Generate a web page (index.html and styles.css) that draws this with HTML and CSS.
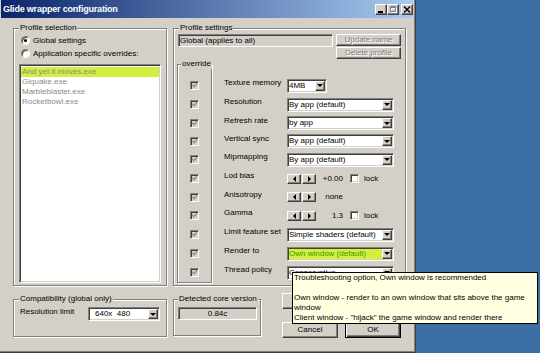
FILE: index.html
```html
<!DOCTYPE html>
<html lang="en">
<head>
    <meta charset="UTF-8">
    <title>Glide wrapper configuration</title>
    <link rel="stylesheet" href="styles.css">
</head>
<body>
    <div class="window">
        <div class="titlebar">
            <span class="title">Glide wrapper configuration</span>
            <div class="caption">
                <span class="cap-btn raised"><svg width="8" height="7" viewBox="0 0 8 7"><rect x="1" y="5" width="5" height="2" fill="#000"/></svg></span>
                <span class="cap-btn raised"><svg width="8" height="7" viewBox="0 0 8 7"><path d="M2.5 2.5h5v4h-5z" stroke="#fff" fill="none"/><path d="M1.5 0.5h5v5h-5zM1.5 1.5h5" stroke="#808080" fill="none"/></svg></span>
                <span class="cap-btn raised close"><svg width="8" height="7" viewBox="0 0 8 7"><path d="M1 0.5l6 6M7 0.5l-6 6" stroke="#000" stroke-width="1.4"/></svg></span>
            </div>
        </div>

        <div class="client">
            <!-- left: profile list -->
            <div class="group profile-select">
                <span class="group-title">Profile selection</span>
                <div class="radio-row first"><span class="radio checked"></span>Global settings</div>
                <div class="radio-row"><span class="radio"></span>Application specific overrides:</div>
                <ul class="listbox sunken">
                    <li class="selected">And yet it moves.exe</li>
                    <li>Glquake.exe</li>
                    <li>Marbleblaster.exe</li>
                    <li>Rocketbowl.exe</li>
                </ul>
            </div>

            <!-- right: settings of the chosen profile -->
            <div class="group profile-settings">
                <span class="group-title">Profile settings</span>
                <div class="profile-row">
                    <div class="edit sunken">Global (applies to all)</div>
                    <div class="profile-buttons">
                        <button class="btn raised" disabled>Update name</button>
                        <button class="btn raised" disabled>Delete profile</button>
                    </div>
                </div>

                <div class="settings">
                    <div class="group override">
                        <span class="group-title">override</span>
                        <span class="check sunken disabled checked"></span>
                        <span class="check sunken disabled checked"></span>
                        <span class="check sunken disabled checked"></span>
                        <span class="check sunken disabled checked"></span>
                        <span class="check sunken disabled checked"></span>
                        <span class="check sunken disabled checked"></span>
                        <span class="check sunken disabled checked"></span>
                        <span class="check sunken disabled checked"></span>
                        <span class="check sunken disabled checked"></span>
                        <span class="check sunken disabled checked"></span>
                        <span class="check sunken disabled checked"></span>
                    </div>

                    <div class="rows">
                        <span class="label">Texture memory</span>
                        <div class="combo sunken narrow"><span class="combo-text">4MB</span><span class="drop raised"></span></div>

                        <span class="label">Resolution</span>
                        <div class="combo sunken"><span class="combo-text">By app (default)</span><span class="drop raised"></span></div>

                        <span class="label">Refresh rate</span>
                        <div class="combo sunken"><span class="combo-text">by app</span><span class="drop raised"></span></div>

                        <span class="label">Vertical sync</span>
                        <div class="combo sunken"><span class="combo-text">By app (default)</span><span class="drop raised"></span></div>

                        <span class="label">Mipmapping</span>
                        <div class="combo sunken"><span class="combo-text">By app (default)</span><span class="drop raised"></span></div>

                        <span class="label">Lod bias</span>
                        <div class="spin-row">
                            <span class="arrow raised left"></span><span class="arrow raised right"></span>
                            <span class="value">+0.00</span>
                            <span class="check sunken lock"></span><span class="lock-text">lock</span>
                        </div>

                        <span class="label">Anisotropy</span>
                        <div class="spin-row">
                            <span class="arrow raised left"></span><span class="arrow raised right"></span>
                            <span class="value">none</span>
                        </div>

                        <span class="label">Gamma</span>
                        <div class="spin-row">
                            <span class="arrow raised left"></span><span class="arrow raised right"></span>
                            <span class="value">1.3</span>
                            <span class="check sunken lock"></span><span class="lock-text">lock</span>
                        </div>

                        <span class="label">Limit feature set</span>
                        <div class="combo sunken"><span class="combo-text">Simple shaders (default)</span><span class="drop raised"></span></div>

                        <span class="label">Render to</span>
                        <div class="combo sunken hl"><span class="combo-text">Own window (default)</span><span class="drop raised"></span></div>

                        <span class="label">Thread policy</span>
                        <div class="combo sunken"><span class="combo-text">Conservative</span><span class="drop raised"></span></div>
                    </div>
                </div>
            </div>

            <div class="group compat">
                <span class="group-title">Compatibility (global only)</span>
                <div class="compat-row">
                    <span class="compat-label">Resolution limit</span>
                    <div class="combo sunken res"><span class="combo-text">640x&nbsp; 480</span><span class="drop raised"></span></div>
                </div>
            </div>

            <div class="bottom-right">
                <div class="group core">
                    <span class="group-title">Detected core version</span>
                    <div class="field sunken">0.84c</div>
                </div>
                <div class="dialog-buttons">
                    <button class="btn raised"></button>
                    <button class="btn raised"></button>
                    <button class="btn raised">Cancel</button>
                    <button class="btn raised default">OK</button>
                </div>
            </div>
        </div>
    </div>

    <div class="tooltip">
        <p>Troubleshooting option, Own window is recommended</p>
        <p class="blank"></p>
        <p>Own window - render to an own window that sits above the game<br>window</p>
        <p>Client window - "hijack" the game window and render there</p>
    </div>
</body>
</html>
```

FILE: styles.css
```css
* {
    box-sizing: border-box;
}
html, body {
    margin: 0;
    height: 100%;
    overflow: hidden;
}
body {
    --rows: 19px 19px 18px 18px 19px 19px 18px 19px 19px 19px 19px;
    background-color: #3a6ea5;
    font-family: "Liberation Sans", Arial, sans-serif;
    font-size: 8px;
    line-height: 10px;
    color: #000;
}

/* 3d borders */
.sunken {
    border: 1px solid;
    border-color: #808080 #fff #fff #808080;
    box-shadow: inset 1px 1px #404040, inset -1px -1px #d4d0c8;
}
.raised {
    border: 1px solid;
    border-color: #fff #404040 #404040 #fff;
    box-shadow: inset -1px -1px #808080;
    background-color: #d4d0c8;
}

.window {
    display: flex;
    flex-direction: column;
    width: 418px;
    height: 356px;
    margin: -3px 0 0 -2px;
    padding: 2px;
    background-color: #d4d0c8;
    border: 1px solid;
    border-color: #d4d0c8 #404040 #404040 #d4d0c8;
    box-shadow: inset 1px 1px #fff, inset -1px -1px #808080;
}
.titlebar {
    display: flex;
    align-items: center;
    height: 18px;
    padding-left: 2px;
    background: linear-gradient(to right, #0a246a, #a6caf0);
}
.title {
    color: #fff;
    font-weight: bold;
    font-size: 9px;
    letter-spacing: -0.2px;
}
.caption {
    display: flex;
    margin-left: auto;
}
.cap-btn {
    display: flex;
    align-items: center;
    justify-content: center;
    width: 12px;
    height: 11px;
}
.cap-btn.close {
    margin-left: 2px;
}

.client {
    display: grid;
    grid-template-columns: 154px 233px;
    grid-template-rows: 258px auto;
    column-gap: 6px;
    row-gap: 7px;
    padding: 10px 0 0 12px;
}

/* group boxes */
.group {
    display: flex;
    flex-direction: column;
    border: 1px solid #808080;
    box-shadow: inset 1px 1px #fff, 1px 1px #fff;
}
.group-title {
    align-self: flex-start;
    margin-top: -6px;
    padding: 0 1px;
    background-color: #d4d0c8;
    white-space: nowrap;
}

.profile-select {
    padding: 0 5px 2px;
}
.radio-row {
    display: flex;
    align-items: center;
    height: 13px;
    white-space: nowrap;
}
.radio-row.first {
    margin-top: 1px;
}
.radio {
    display: flex;
    align-items: center;
    justify-content: center;
    width: 9px;
    height: 9px;
    margin: 0 3px 0 2px;
    border-radius: 50%;
    background-color: #fff;
    border: 1px solid;
    border-color: #808080 #fff #fff #808080;
    box-shadow: inset 1px 1px #404040;
}
.radio.checked::after {
    content: "";
    width: 3px;
    height: 3px;
    border-radius: 50%;
    background-color: #000;
}
.listbox {
    flex: 1;
    margin: 4px 0 0;
    padding: 2px 1px 0;
    list-style: none;
    background-color: #fff;
}
.listbox li {
    height: 10px;
    padding-left: 1px;
    color: #8a8a8a;
}
.listbox li.selected {
    background-color: #d3ee3e;
}

.profile-settings {
    padding: 0 4px;
}
.profile-settings > .group-title {
    margin-left: 1px;
}
.profile-row {
    display: flex;
    margin-top: 1px;
}
.edit {
    width: 155px;
    height: 13px;
    padding-left: 1px;
    line-height: 11px;
    white-space: nowrap;
    background-color: #d4d0c8;
}
.profile-buttons {
    display: flex;
    flex-direction: column;
    gap: 1px;
    width: 65px;
    margin-left: 3px;
}
.btn {
    margin: 0;
    padding: 0;
    height: 12px;
    font: inherit;
    line-height: 10px;
    color: #000;
}
.btn:disabled {
    color: #808080;
    text-shadow: 1px 1px #fff;
}
.btn.default {
    border-color: #000;
    box-shadow: inset 1px 1px #fff, inset -1px -1px #404040, inset -2px -2px #808080;
}

.settings {
    display: flex;
    margin: 5px 0 0 -1px;
}
.override {
    display: grid;
    grid-template-rows: 11px var(--rows);
    justify-items: center;
    align-items: center;
    width: 35px;
}
.override .group-title {
    justify-self: start;
    margin-left: 3px;
}
.check {
    display: flex;
    align-items: center;
    justify-content: center;
    width: 9px;
    height: 9px;
    background-color: #fff;
}
.check.disabled {
    background-color: #d4d0c8;
}
.check.checked::after {
    content: "";
    box-sizing: content-box;
    width: 4px;
    height: 1.5px;
    margin-top: -2px;
    border-left: 1.5px solid #808080;
    border-bottom: 1.5px solid #808080;
    transform: rotate(-45deg);
}

.rows {
    display: grid;
    grid-template-columns: 63px auto;
    grid-template-rows: var(--rows);
    align-items: center;
    justify-items: start;
    padding-top: 12px;
    margin-left: 12px;
}
.label {
    margin-bottom: 5px;
    white-space: nowrap;
}
.combo {
    display: flex;
    align-items: center;
    width: 107px;
    height: 14px;
    padding: 1px;
    background-color: #fff;
}
.combo.narrow {
    width: 40px;
}
.combo.hl {
    background-color: #d3ef3c;
    color: #3c9a00;
}
.combo-text {
    flex: 1;
    overflow: hidden;
    white-space: nowrap;
    line-height: 10px;
}
.drop {
    display: flex;
    align-items: center;
    justify-content: center;
    width: 10px;
    height: 10px;
}
.drop::after {
    content: "";
    border-left: 3px solid transparent;
    border-right: 3px solid transparent;
    border-top: 3px solid #000;
}

.spin-row {
    display: flex;
    align-items: center;
}
.arrow {
    display: flex;
    align-items: center;
    justify-content: center;
    width: 14px;
    height: 10px;
}
.arrow + .arrow {
    margin-left: 1px;
}
.arrow.left::after,
.arrow.right::after {
    content: "";
    border-top: 3px solid transparent;
    border-bottom: 3px solid transparent;
}
.arrow.left::after {
    border-right: 3px solid #000;
}
.arrow.right::after {
    border-left: 3px solid #000;
}
.value {
    width: 27px;
    text-align: right;
}
.lock {
    margin-left: 7px;
}
.lock-text {
    margin-left: 5px;
}

/* bottom row */
.compat {
    height: 38px;
    margin-top: 6px;
    padding-left: 5px;
}
.compat-row {
    display: flex;
    margin-top: 3px;
    padding-left: 1px;
}
.compat-label {
    width: 68px;
}
.combo.res {
    width: 72px;
}
.combo.res .combo-text {
    padding-left: 5px;
}

.bottom-right {
    display: flex;
    align-items: flex-start;
}
.core {
    width: 88px;
    height: 37px;
    margin-top: 6px;
    padding-left: 4px;
}
.field {
    width: 79px;
    height: 13px;
    margin-top: 3px;
    line-height: 11px;
    text-align: center;
    background-color: #d4d0c8;
}
.dialog-buttons {
    display: grid;
    grid-template-columns: 56px 56px;
    grid-template-rows: 16px 16px;
    column-gap: 7px;
    row-gap: 13px;
    margin-left: 21px;
}
.dialog-buttons .btn {
    height: 16px;
}

.tooltip {
    position: absolute;
    left: 292px;
    top: 272px;
    width: 246px;
    height: 52px;
    padding-left: 1px;
    background-color: #ffffe1;
    border: 1px solid #000;
    white-space: nowrap;
}
.tooltip p {
    margin: 0;
}
.tooltip .blank {
    height: 10px;
}
```
